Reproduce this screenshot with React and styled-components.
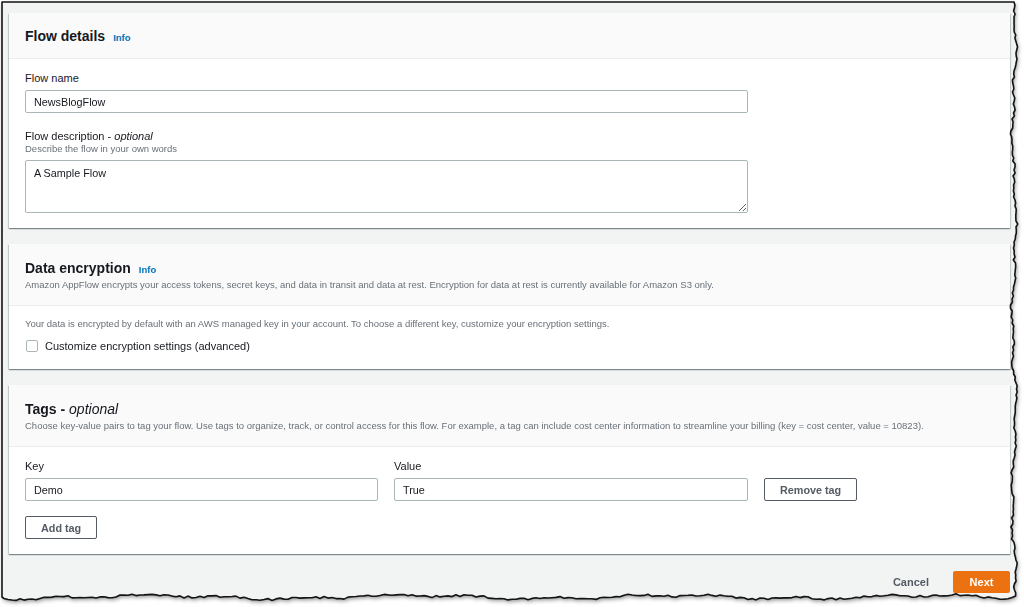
import React from 'react'
import styled, { createGlobalStyle } from 'styled-components'

const GlobalStyle = createGlobalStyle`
  html, body {
    margin: 0;
    padding: 0;
    background: #ffffff;
  }
  body {
    font-family: 'Liberation Sans', Arial, sans-serif;
    color: #16191f;
  }
`

const Page = styled.div`
  position: relative;
  width: 1024px;
  height: 607px;
  overflow: hidden;
  background: #ffffff;
`
const ShadowWrap = styled.div`
  filter: drop-shadow(1px 2px 2px rgba(0, 0, 0, 0.45));
`
const Sheet = styled.div`
  box-sizing: border-box;
  height: 607px;
  padding: 13px 14px 0 9px;
  background: #f2f3f3;
  display: flex;
  flex-direction: column;
  gap: 16px;
`
const TornOutline = styled.svg`
  position: absolute;
  inset: 0;
  pointer-events: none;
`
const Card = styled.section`
  background: #ffffff;
  box-shadow: 0 1px 1px 0 rgba(0, 28, 36, 0.3), 1px 1px 1px 0 rgba(0, 28, 36, 0.15),
    -1px 1px 1px 0 rgba(0, 28, 36, 0.15);
`
const CardHeader = styled.header`
  box-sizing: border-box;
  background: #fafafa;
  border-bottom: 1px solid #eaeded;
  padding: ${p => (p.$compact ? '0 16px' : '15px 16px 14px')};
  height: ${p => (p.$compact ? '46px' : 'auto')};
  display: flex;
  flex-direction: column;
  justify-content: center;
`
const TitleRow = styled.div`
  display: flex;
  align-items: baseline;
  gap: 8px;
`
const Title = styled.h2`
  margin: 0;
  font-size: 14px;
  line-height: 18px;
  font-weight: bold;
  color: #16191f;
  & em {
    font-weight: normal;
  }
`
const InfoLink = styled.a`
  font-size: 9.5px;
  font-weight: bold;
  color: #0073bb;
  text-decoration: none;
`
const Description = styled.p`
  margin: 2px 0 0;
  font-size: 9.5px;
  line-height: 12px;
  color: #687078;
`
const CardBody = styled.div`
  padding: 12px 16px ${p => p.$bottom ?? 16}px;
  display: flex;
  flex-direction: column;
  align-items: flex-start;
`
const Field = styled.div`
  display: flex;
  flex-direction: column;
  margin-bottom: ${p => p.$gap || 0}px;
  width: 100%;
  max-width: 723px;
`
const Label = styled.label`
  font-size: 11px;
  line-height: 14px;
  color: #16191f;
  & em {
    font-style: italic;
  }
`
const Hint = styled.div`
  font-size: 9.5px;
  line-height: 12px;
  color: #687078;
`
const TextInput = styled.input`
  box-sizing: border-box;
  margin-top: 5px;
  width: 100%;
  height: 23px;
  padding: 0 8px;
  border: 1px solid #aab7b8;
  border-radius: 2px;
  font-family: inherit;
  font-size: 10.8px;
  color: #16191f;
  background: #fff;
  outline: none;
`
const TextArea = styled.textarea`
  box-sizing: border-box;
  margin-top: 5px;
  width: 100%;
  height: 53px;
  padding: 5px 8px;
  border: 1px solid #aab7b8;
  border-radius: 2px;
  font-family: inherit;
  font-size: 10.8px;
  line-height: 14px;
  color: #16191f;
  resize: vertical;
  outline: none;
`
const BodyText = styled.p`
  margin: 0;
  font-size: 9.5px;
  line-height: 12px;
  color: #687078;
`
const CheckRow = styled.label`
  margin-top: 9px;
  display: flex;
  align-items: center;
  gap: 7px;
  font-size: 11px;
  line-height: 14px;
  color: #16191f;
`
const CheckBox = styled.span`
  box-sizing: border-box;
  margin-left: 1px;
  width: 12px;
  height: 12px;
  border: 1px solid #aab7b8;
  border-radius: 2px;
  background: #fff;
`
const TagGrid = styled.div`
  display: grid;
  grid-template-columns: 353px 354px auto;
  column-gap: 16px;
  align-items: end;
`
const Button = styled.button`
  box-sizing: border-box;
  height: 23px;
  padding: 0 15px;
  border: 1px solid #545b64;
  border-radius: 2px;
  background: #fff;
  color: #545b64;
  font-family: inherit;
  font-size: 10.8px;
  font-weight: bold;
  justify-self: start;
  align-self: ${p => p.$self || 'auto'};
  margin-top: ${p => p.$top || 0}px;
`
const Footer = styled.footer`
  margin-top: 1px;
  display: flex;
  justify-content: flex-end;
  align-items: center;
  gap: 8px;
`
const LinkButton = styled.button`
  height: 22px;
  padding: 0 16px;
  border: none;
  background: transparent;
  color: #545b64;
  font-family: inherit;
  font-size: 11px;
  font-weight: bold;
`
const PrimaryButton = styled.button`
  height: 22px;
  width: 57px;
  border: none;
  border-radius: 2px;
  background: #ec7211;
  color: #fff;
  font-family: inherit;
  font-size: 11px;
  font-weight: bold;
`

// rough torn paper edge along the right and bottom of the sheet
function buildTear() {
  let seed = 11
  const rnd = () => {
    seed = (seed * 16807) % 2147483647
    return seed / 2147483647 - 0.5
  }
  const pts = [[2, 2]]
  for (let y = 2; y <= 598; y += 3) {
    const x = 1014 + 1.8 * Math.sin(y / 29) + 1.2 * Math.sin(y / 9 + 2) + rnd() * 2.2
    pts.push([x, y])
  }
  for (let x = 1012; x >= 2; x -= 4) {
    const y = 597 + 1.6 * Math.sin(x / 41 + 1) + 1.1 * Math.sin(x / 13) + rnd() * 2.2
    pts.push([x, y])
  }
  pts.push([2, 597])
  return pts
}

const tear = buildTear()
const clip = `polygon(${tear.map(([x, y]) => `${x.toFixed(1)}px ${y.toFixed(1)}px`).join(', ')})`
const outline = tear.map(([x, y], i) => `${i ? 'L' : 'M'}${x.toFixed(1)} ${y.toFixed(1)}`).join(' ') + ' Z'

const App = () => (
  <Page>
    <GlobalStyle />
    <ShadowWrap>
      <Sheet style={{ clipPath: clip }}>
        <Card>
          <CardHeader $compact>
            <TitleRow>
              <Title>Flow details</Title>
              <InfoLink>Info</InfoLink>
            </TitleRow>
          </CardHeader>
          <CardBody $bottom={15}>
            <Field $gap={16}>
              <Label>Flow name</Label>
              <TextInput defaultValue="NewsBlogFlow" />
            </Field>
            <Field>
              <Label>
                Flow description - <em>optional</em>
              </Label>
              <Hint>Describe the flow in your own words</Hint>
              <TextArea defaultValue="A Sample Flow" />
            </Field>
          </CardBody>
        </Card>

        <Card>
          <CardHeader>
            <TitleRow>
              <Title>Data encryption</Title>
              <InfoLink>Info</InfoLink>
            </TitleRow>
            <Description>
              Amazon AppFlow encrypts your access tokens, secret keys, and data in transit and data at rest.
              Encryption for data at rest is currently available for Amazon S3 only.
            </Description>
          </CardHeader>
          <CardBody>
            <BodyText>
              Your data is encrypted by default with an AWS managed key in your account. To choose a different key,
              customize your encryption settings.
            </BodyText>
            <CheckRow>
              <CheckBox />
              Customize encryption settings (advanced)
            </CheckRow>
          </CardBody>
        </Card>

        <Card>
          <CardHeader>
            <Title>
              Tags - <em>optional</em>
            </Title>
            <Description>
              Choose key-value pairs to tag your flow. Use tags to organize, track, or control access for this flow.
              For example, a tag can include cost center information to streamline your billing (key = cost center,
              value = 10823).
            </Description>
          </CardHeader>
          <CardBody $bottom={15}>
            <TagGrid>
              <Field>
                <Label>Key</Label>
                <TextInput defaultValue="Demo" />
              </Field>
              <Field>
                <Label>Value</Label>
                <TextInput defaultValue="True" />
              </Field>
              <Button $self="end">Remove tag</Button>
            </TagGrid>
            <Button $top={15}>Add tag</Button>
          </CardBody>
        </Card>

        <Footer>
          <LinkButton>Cancel</LinkButton>
          <PrimaryButton>Next</PrimaryButton>
        </Footer>
      </Sheet>
    </ShadowWrap>
    <TornOutline width="1024" height="607" viewBox="0 0 1024 607">
      <path d={outline} fill="none" stroke="#141414" strokeWidth="1.6" strokeLinejoin="round" />
    </TornOutline>
  </Page>
)

export default App
